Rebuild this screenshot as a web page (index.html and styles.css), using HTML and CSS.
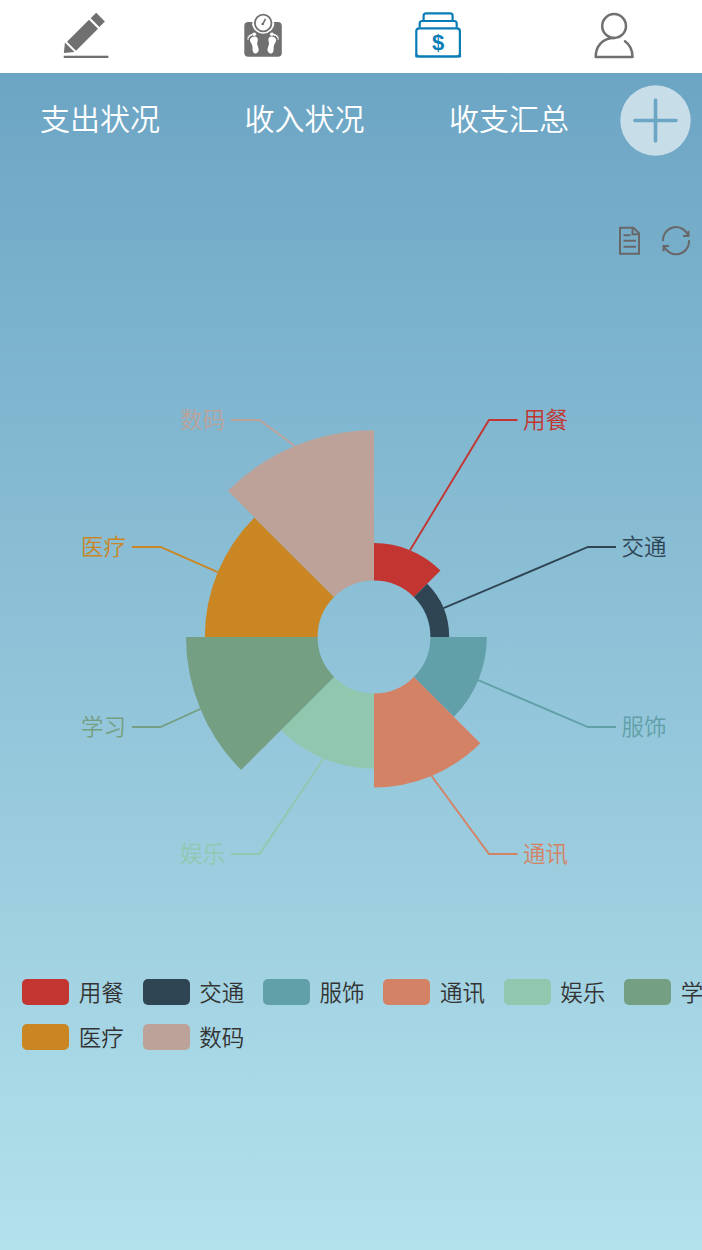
FILE: index.html
```html
<!DOCTYPE html>
<html lang="zh-CN">
<head>
<meta charset="utf-8">
<title>支出状况</title>
<link rel="stylesheet" href="styles.css">
</head>
<body>
<nav class="topbar">
  <a class="nav-item"><svg viewBox="-1.7 0 80 73" width="80" height="73"><g fill="#707070"><path d="M46.500 12.800 55.200 21.500 49.700 27 41 18.300z"/><path d="M39.300 19.700 48.300 28.700 26.300 50.700 17.300 41.700z"/><path d="M15.200 42.500 24.800 52 14.200 53z"/><rect x="14" y="55.700" width="44.700" height="2.300"/></g></svg></a>
  <a class="nav-item"><svg viewBox="-.5 0 80 73" width="80" height="73"><rect x="20.800" y="22" width="37.500" height="34.800" rx="4" fill="#707070"/><path d="M29 22h21.400v1.400a10.700 10.300 0 0 1-21.400 0z" fill="#fff"/><circle cx="39.700" cy="23.300" r="10" fill="#fff"/><path d="M28.800 23.500a11 9.500 0 0 0 21.800 0" fill="none" stroke="#fff" stroke-width="1"/><circle cx="39.700" cy="23" r="8.300" fill="#fff" stroke="#707070" stroke-width="1.800"/><path d="M39.300 24 42 18.800" stroke="#707070" stroke-width="1.600" fill="none"/><circle cx="39.200" cy="24" r="1.300" fill="#707070"/><g fill="#fff"><g id="foot"><path d="M26.600 39.300c1-2.900 6.500-4.100 7.600-.7.700 2.400-1.200 4-.3 6.300 1 2.700 1.800 4.400.9 6.700-1.200 2.700-4.600 2.500-5.500-.4-.6-2.300.1-3.600-.7-6.200-.7-2.200-2.600-3.400-2-5.700z"/><ellipse cx="30.700" cy="34.200" rx="2" ry="1.700"/><circle cx="27.800" cy="35" r="1.100"/><circle cx="26" cy="36" r=".95"/><circle cx="24.900" cy="37.300" r=".85"/><circle cx="24.500" cy="39" r=".75"/></g><use href="#foot" transform="translate(79.200 0) scale(-1 1)"/></g></svg></a>
  <a class="nav-item"><svg viewBox="0 0 80 73" width="80" height="73"><g fill="none" stroke="#087cb5" stroke-width="2.200" stroke-linejoin="round"><rect x="17.300" y="28.300" width="43.600" height="28.200" rx="3"/><path d="M17.300 54v2.500H61V54"/><path d="M20.700 27.500v-4q0-2.500 2.500-2.500h32q2.500 0 2.500 2.500v4M24.600 20v-4.200q0-2.500 2.500-2.500h24q2.500 0 2.500 2.500V20"/></g><text class="dollar" x="39.100" y="50.300">$</text></svg></a>
  <a class="nav-item"><svg viewBox="-.7 0 80 73" width="80" height="73"><g fill="none" stroke="#707070" stroke-width="2.500" stroke-linecap="round" stroke-linejoin="round"><circle cx="39.400" cy="26" r="11.900"/><path d="M39.400 38C28 38 21 46 21 57h36.800c0-7-3-12.500-7.500-15.700"/></g></svg></a>
</nav>
<main class="page">
  <div class="tabs">
    <a class="tab">支出状况</a><a class="tab">收入状况</a><a class="tab">收支汇总</a>
    <button class="add" aria-label="添加"><svg viewBox="0 0 71 71" width="71" height="71"><circle cx="35.500" cy="35.500" r="35.200" fill="#c7dde8"/><path d="M35.500 15v41M15 35.500h41" stroke="#6ca6c5" stroke-width="3.600" stroke-linecap="round"/></svg></button>
  </div>
  <div class="tools">
    <svg viewBox="0.5 .3 22 30" width="22" height="30"><g fill="none" stroke="#686868" stroke-width="2"><path d="M1.500 2H15l5.500 5.500V28h-19zM14 2v6.500h6.500M5 9.600h7M5 15h12.500M5 21h12.500"/></g></svg>
    <svg viewBox="0 .3 30 30" width="30" height="30"><g fill="none" stroke="#686868" stroke-width="2"><path d="M2 15.500A13 13 0 0 1 27 9.500M28 14.500A13 13 0 0 1 3 20.500M27.500 5v5.300H22M2.500 25.500v-5.300H8"/></g></svg>
  </div>
  <svg class="chart" viewBox="0 380 702 510" width="702" height="510">
    <g transform="translate(374 637)">
      <path fill="#c23531" d="M0-56.400V-94A94 94 0 0 1 66.500-66.500L39.900-39.900A56.400 56.400 0 0 0 0-56.400z"/>
      <path fill="#2f4554" d="M39.900-39.900 53.200-53.200A75.200 75.200 0 0 1 75.200 0H56.400A56.400 56.400 0 0 0 39.900-39.900z"/>
      <path fill="#61a0a8" d="M56.400 0H112.800A112.800 112.800 0 0 1 79.800 79.800L39.900 39.900A56.400 56.400 0 0 0 56.400 0z"/>
      <path fill="#d48265" d="M39.900 39.900 106.300 106.300A150.400 150.400 0 0 1 0 150.400V56.400A56.400 56.400 0 0 0 39.900 39.900z"/>
      <path fill="#91c7ae" d="M0 56.400V131.600A131.600 131.600 0 0 1-93.100 93.100L-39.900 39.900A56.400 56.400 0 0 0 0 56.400z"/>
      <path fill="#749f83" d="M-39.900 39.900-132.900 132.900A188 188 0 0 1-188 0H-56.400A56.400 56.400 0 0 0-39.900 39.900z"/>
      <path fill="#ca8622" d="M-56.400 0H-169.200A169.200 169.200 0 0 1-119.600-119.600L-39.900-39.900A56.400 56.400 0 0 0-56.400 0z"/>
      <path fill="#bda29a" d="M-39.900-39.900-146.200-146.200A206.800 206.800 0 0 1 0-206.800V-56.400A56.400 56.400 0 0 0-39.900-39.900z"/>
    </g>
    <g class="leaders">
      <path stroke="#c23531" d="M410 550.200 489 420h28.500"/>
      <path stroke="#2f4554" d="M443.500 608.200 588 547h28"/>
      <path stroke="#61a0a8" d="M478.200 680.200 588 727h28"/>
      <path stroke="#d48265" d="M431.600 776 489 854h28.500"/>
      <path stroke="#91c7ae" d="M323.600 758.600 259.500 854H231"/>
      <path stroke="#749f83" d="M200.300 709 160.500 727H132"/>
      <path stroke="#ca8622" d="M217.700 572.200 160.500 547H132"/>
      <path stroke="#bda29a" d="M294.900 445.900 259.500 420H231"/>
    </g>
    <g class="labels">
      <text x="523" y="427.500" fill="#c23531">用餐</text>
      <text x="621.500" y="554.500" fill="#2f4554">交通</text>
      <text x="621.500" y="734.500" fill="#61a0a8">服饰</text>
      <text x="523" y="861.500" fill="#d48265">通讯</text>
      <text x="180" y="861.500" fill="#91c7ae">娱乐</text>
      <text x="81" y="734.500" fill="#749f83">学习</text>
      <text x="81" y="554.500" fill="#ca8622">医疗</text>
      <text x="180" y="427.500" fill="#bda29a">数码</text>
    </g>
  </svg>
  <div class="legend">
    <div class="legend-row">
      <span class="key"><i class="swatch red"></i><span class="name">用餐</span></span>
      <span class="key"><i class="swatch navy"></i><span class="name">交通</span></span>
      <span class="key"><i class="swatch teal"></i><span class="name">服饰</span></span>
      <span class="key"><i class="swatch coral"></i><span class="name">通讯</span></span>
      <span class="key"><i class="swatch mint"></i><span class="name">娱乐</span></span>
      <span class="key"><i class="swatch green"></i><span class="name">学习</span></span>
    </div>
    <div class="legend-row">
      <span class="key"><i class="swatch amber"></i><span class="name">医疗</span></span>
      <span class="key"><i class="swatch taupe"></i><span class="name">数码</span></span>
    </div>
  </div>
</main>
</body>
</html>
```
FILE: styles.css
```css
* { box-sizing: border-box; }
body {
  margin: 0;
  width: 702px;
  height: 1250px;
  overflow: hidden;
  font-family: "Noto Sans CJK SC", sans-serif;
}
.topbar {
  display: grid;
  grid-template-columns: repeat(4, 1fr);
  height: 73px;
  background: #fff;
}
.nav-item { display: flex; justify-content: center; }
.nav-item svg { display: block; }
.dollar {
  font: bold 22px "Liberation Sans", sans-serif;
  text-anchor: middle;
  fill: #087cb5;
}
.page {
  height: 1177px;
  overflow: hidden;
  background: linear-gradient(#6ca5c4, #b3e1ec);
}
.tabs {
  display: flex;
  align-items: center;
  height: 94px;
  padding-left: 40px;
}
.tab {
  width: 204.500px;
  padding-bottom: 6px;
  font-size: 30px;
  line-height: 44px;
  font-weight: 350;
  color: #fff;
  white-space: nowrap;
}
.add {
  width: 71px;
  height: 71px;
  margin-left: -33.500px;
  padding: 0;
  border: 0;
  background: none;
  flex: none;
}
.add svg { display: block; }
.tools {
  display: flex;
  justify-content: flex-end;
  gap: 20px;
  height: 213px;
  padding: 59px 11px 0 0;
}
.chart { display: block; }
.leaders { fill: none; stroke-width: 1.900; }
.labels { font-size: 22.500px; font-weight: 350; }
.legend {
  display: flex;
  flex-direction: column;
  gap: 19px;
  padding: 89px 0 0 22.300px;
}
.legend-row { display: flex; gap: 18.400px; height: 26px; }
.key {
  display: flex;
  flex: none;
  align-items: center;
  gap: 9.500px;
  width: 102px;
  font-size: 22.500px;
  font-weight: 350;
  line-height: 26px;
  color: #333;
  white-space: nowrap;
}
.name { padding-bottom: 3px; }
.swatch { width: 47px; height: 26px; border-radius: 5px; flex: none; }
.red { background: #c23531; }
.navy { background: #2f4554; }
.teal { background: #61a0a8; }
.coral { background: #d48265; }
.mint { background: #91c7ae; }
.green { background: #749f83; }
.amber { background: #ca8622; }
.taupe { background: #bda29a; }
```
